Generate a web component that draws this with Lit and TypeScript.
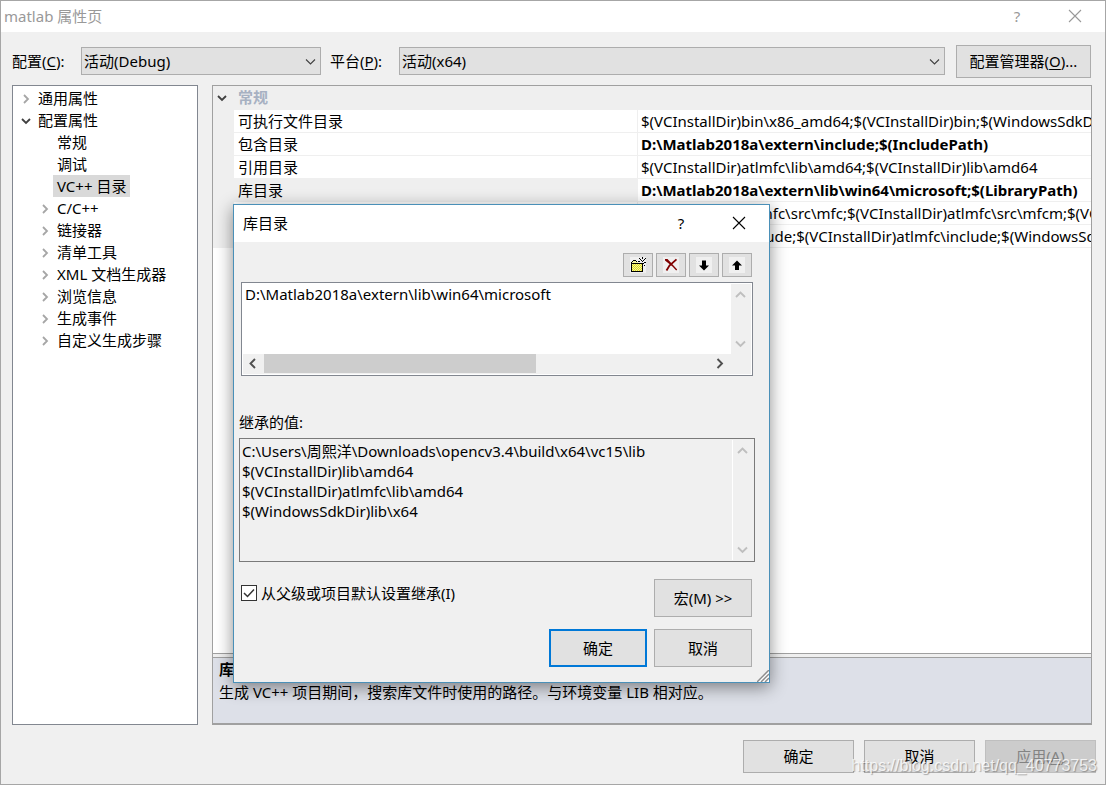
import { LitElement, html, css, svg, nothing } from "lit";
import { customElement, property } from "lit/decorators.js";
import { classMap } from "lit/directives/class-map.js";

const uiFont = css`"Noto Sans", "Noto Sans CJK SC", sans-serif`;

const controls = css`
  *,
  *::before,
  *::after {
    box-sizing: border-box;
  }
  button,
  select,
  textarea,
  input {
    margin: 0;
    font: inherit;
    color: inherit;
    border-radius: 0;
  }
  button {
    padding: 0;
    background: #e1e1e1;
    border: 1px solid #adadad;
    white-space: nowrap;
  }
  svg {
    display: block;
  }
`;

type Direction = "up" | "down" | "left" | "right";

const scrollPaths: Record<Direction, string> = {
  up: "M1 8L5.500 3.500L10 8",
  down: "M1 3.500L5.500 8L10 3.500",
  left: "M8 1L3.500 5.500L8 10",
  right: "M3.500 1L8 5.500L3.500 10",
};

const chevron = (dir: Direction, color: string) => html`
  <svg width="11" height="11" viewBox="0 0 11 11" aria-hidden="true">
    <path d=${scrollPaths[dir]} fill="none" stroke=${color} stroke-width="1.900" />
  </svg>
`;

const treeArrow = (open: boolean) => html`
  <svg width="10" height="10" viewBox="0 0 10 10" aria-hidden="true">
    <path
      d=${open ? "M1 3L5 7L9 3" : "M3 1L7 5L3 9"}
      fill="none"
      stroke=${open ? "#404040" : "#a6a6a6"}
      stroke-width="1.800"
    />
  </svg>
`;

interface TreeNode {
  label: string;
  level: 1 | 2;
  arrow?: "open" | "closed";
  selected?: boolean;
}

const tree: TreeNode[] = [
  { label: "通用属性", level: 1, arrow: "closed" },
  { label: "配置属性", level: 1, arrow: "open" },
  { label: "常规", level: 2 },
  { label: "调试", level: 2 },
  { label: "VC++ 目录", level: 2, selected: true },
  { label: "C/C++", level: 2, arrow: "closed" },
  { label: "链接器", level: 2, arrow: "closed" },
  { label: "清单工具", level: 2, arrow: "closed" },
  { label: "XML 文档生成器", level: 2, arrow: "closed" },
  { label: "浏览信息", level: 2, arrow: "closed" },
  { label: "生成事件", level: 2, arrow: "closed" },
  { label: "自定义生成步骤", level: 2, arrow: "closed" },
];

interface PropertyRow {
  name: string;
  value: string;
  changed?: boolean;
  selected?: boolean;
}

const rows: PropertyRow[] = [
  { name: "可执行文件目录", value: "$(VCInstallDir)bin\\x86_amd64;$(VCInstallDir)bin;$(WindowsSdkDir)bin" },
  { name: "包含目录", value: "D:\\Matlab2018a\\extern\\include;$(IncludePath)", changed: true },
  { name: "引用目录", value: "$(VCInstallDir)atlmfc\\lib\\amd64;$(VCInstallDir)lib\\amd64" },
  { name: "库目录", value: "D:\\Matlab2018a\\extern\\lib\\win64\\microsoft;$(LibraryPath)", changed: true, selected: true },
  { name: "源目录", value: "$(VCInstallDir)atlmfc\\src\\mfc;$(VCInstallDir)atlmfc\\src\\mfcm;$(VCInstallDir)" },
  { name: "排除目录", value: "$(VCInstallDir)include;$(VCInstallDir)atlmfc\\include;$(WindowsSdkDir)include" },
];

@customElement("category-tree")
class CategoryTree extends LitElement {
  static styles = [
    controls,
    css`
      :host {
        display: block;
        border: 1px solid #828790;
        background: #fff;
        padding-top: 1px;
        overflow: hidden;
      }
      .list {
        list-style: none;
        margin: 0;
        padding: 0 0 0 5px;
      }
      .node {
        display: flex;
        height: 22px;
        line-height: 22px;
        white-space: nowrap;
      }
      .child {
        padding-left: 19px;
      }
      .toggle {
        width: 16px;
        display: flex;
        align-items: center;
        justify-content: center;
        padding-top: 2px;
      }
      .text {
        padding: 0 4px;
      }
      .selected {
        background: #d9d9d9;
      }
    `,
  ];

  render() {
    return html`
      <ul class="list" role="tree" aria-label="属性">
        ${tree.map(
          (node) => html`
            <li
              class=${classMap({ node: true, child: node.level === 2 })}
              role="treeitem"
              aria-level=${node.level}
              aria-selected=${node.selected ? "true" : "false"}
            >
              <span class="toggle">${node.arrow ? treeArrow(node.arrow === "open") : nothing}</span>
              <span class=${classMap({ text: true, selected: !!node.selected })}>${node.label}</span>
            </li>
          `
        )}
      </ul>
    `;
  }
}

@customElement("property-grid")
class PropertyGrid extends LitElement {
  static styles = [
    controls,
    css`
      :host {
        display: flex;
        flex-direction: column;
        border: 1px solid #a0a0a0;
        border-bottom-width: 2px;
        min-width: 0;
        overflow: hidden;
      }
      .sheet {
        flex: 1;
        background: #fff;
        border-bottom: 1px solid #a0a0a0;
        overflow: hidden;
      }
      .table {
        width: 100%;
        table-layout: fixed;
        border-collapse: separate;
        border-spacing: 0;
      }
      .gutter {
        width: 21px;
      }
      .names {
        width: 403px;
      }
      .table td,
      .table th {
        height: 23px;
        padding: 0 0 0 4px;
        line-height: 22px;
        text-align: left;
        font-weight: 400;
        white-space: nowrap;
        overflow: hidden;
        border-bottom: 1px solid #efefef;
      }
      .table .fold {
        background: #efefef;
      }
      .table .category {
        height: 24px;
        background: #efefef;
        color: #a7b1c2;
        font-weight: 700;
        vertical-align: top;
      }
      .table .value {
        border-left: 1px solid #efefef;
        padding-left: 3px;
      }
      .table .changed {
        font-weight: 700;
      }
      .table .current {
        background: #efefef;
      }
      .splitter {
        height: 3px;
        background: #efefef;
      }
      .help {
        height: 66px;
        border-top: 1px solid #a0a0a0;
        background: #dde0e8;
        padding: 0 6px;
        line-height: 23px;
        white-space: nowrap;
      }
      .help-title {
        margin: 0;
        font-size: 15px;
        font-weight: 700;
      }
      .help-text {
        margin: 0;
      }
    `,
  ];

  render() {
    return html`
      <div class="sheet">
        <table class="table">
          <colgroup>
            <col class="gutter" />
            <col class="names" />
            <col />
          </colgroup>
          <thead>
            <tr>
              <td class="fold">${treeArrow(true)}</td>
              <th class="category" colspan="2">常规</th>
            </tr>
          </thead>
          <tbody>
            ${rows.map(
              (row) => html`
                <tr>
                  <td class="fold"></td>
                  <th class=${classMap({ current: !!row.selected })} scope="row">${row.name}</th>
                  <td class=${classMap({ value: true, changed: !!row.changed })}>${row.value}</td>
                </tr>
              `
            )}
          </tbody>
        </table>
      </div>
      <div class="splitter"></div>
      <section class="help">
        <h2 class="help-title">库目录</h2>
        <p class="help-text">生成 VC++ 项目期间，搜索库文件时使用的路径。与环境变量 LIB 相对应。</p>
      </section>
    `;
  }
}

const folderDots = Array.from({ length: 35 }, (_, i) => ({ x: 2 + (i % 5) * 2, y: 7 + Math.floor(i / 5) }));

const newFolderIcon = html`
  <svg width="16" height="16" viewBox="0 0 16 16" shape-rendering="crispEdges" aria-hidden="true">
    <rect width="16" height="16" fill="#f0f0f0" />
    <path d="M2 5h1V4h4v1h1v1h4v9H2z" fill="#f4f4a0" />
    ${folderDots.map((d) => svg`<rect x=${d.x + (d.y % 2)} y=${d.y} width="1" height="1" fill="#e2dc1c" />`)}
    <path
      d="M1 5h1v10H1zM2 4h1v1H2zM3 3h3v1H3zM6 4h1v1H6zM2 6h10v1H2zM12 6h1v9h-1zM1 14h12v1H1z"
      fill="#000"
    />
    <path
      d="M12 0h1v2h-1zM9 1h1v1H9zM10 2h1v1h-1zM11 3h1v1h-1zM15 1h1v1h-1zM14 2h1v1h-1zM13 3h1v1h-1zM8 4h2v1H8zM14 5h2v1h-2zM13 6h1v1h-1zM14 8h1v1h-1zM12 4h1v1h-1z"
      fill="#000"
    />
  </svg>
`;

const deleteIcon = html`
  <svg width="16" height="16" viewBox="0 0 16 16" aria-hidden="true">
    <rect width="16" height="16" fill="#f0f0f0" />
    <path d="M2 2L4.500 2L14.200 12.500L13.200 13.500L9.500 9.500L2 3.500z" fill="#800000" />
    <path d="M13.500 2.300L6.500 8.500L3.500 13.500" fill="none" stroke="#800000" stroke-width="1.800" />
  </svg>
`;

const arrowIcon = (path: string) => html`
  <svg width="16" height="16" viewBox="0 0 16 16" aria-hidden="true">
    <rect width="16" height="16" fill="#f0f0f0" />
    <path d=${path} fill="#000" />
  </svg>
`;

@customElement("directory-dialog")
class DirectoryDialog extends LitElement {
  static styles = [
    controls,
    css`
      :host {
        display: block;
        background: #f0f0f0;
        border: 1px solid #4a90b8;
        box-shadow: 0 4px 16px rgba(0, 0, 0, 0.45);
      }
      .title {
        display: flex;
        align-items: flex-start;
        height: 37px;
        padding-left: 9px;
        background: #fff;
      }
      .name {
        flex: 1;
        margin: 0;
        font-size: 15px;
        line-height: 36px;
        font-weight: 400;
      }
      .caption {
        display: grid;
        place-items: center;
        width: 56px;
        height: 36px;
        border: 0;
        background: none;
      }
      .close {
        width: 60px;
      }
      .tools {
        display: flex;
        justify-content: flex-end;
        gap: 3px;
        padding: 11px 17px 5px;
      }
      .tool {
        display: grid;
        place-items: center;
        width: 30px;
        height: 24px;
      }
      .list {
        display: grid;
        grid-template-columns: 1fr 20px;
        grid-template-rows: 1fr 20px;
        height: 94px;
        margin: 0 16px 0 7px;
        padding: 1px;
        border: 1px solid #828790;
        background: #fff;
      }
      .area {
        display: block;
        width: 100%;
        height: 100%;
        padding: 0 2px;
        border: 0;
        outline: 0;
        resize: none;
        overflow: hidden;
        white-space: pre;
        line-height: 20px;
        background: transparent;
      }
      .vbar {
        display: flex;
        flex-direction: column;
        justify-content: space-between;
        align-items: center;
        padding: 5px 1px 5px 0;
        background: #f0f0f0;
      }
      .hbar {
        grid-column: 1 / 3;
        display: flex;
        align-items: stretch;
        padding-right: 20px;
        background: #f0f0f0;
      }
      .step {
        display: grid;
        place-items: center;
        width: 21px;
        padding: 0 2px 2px 0;
      }
      .track {
        flex: 1;
      }
      .thumb {
        width: 61%;
        height: 19px;
        background: #cdcdcd;
      }
      .caption-line {
        display: block;
        margin: 36px 5px 6px;
        line-height: 20px;
      }
      .inherited {
        display: grid;
        grid-template-columns: 1fr 21px;
        height: 124px;
        margin: 0 14px 0 5px;
        padding: 1px;
        border: 1px solid #7a7a7a;
        background: #f0f0f0;
      }
      .inherited .area {
        padding: 1px;
      }
      .inherited .vbar {
        border-left: 1px solid #fff;
      }
      .options {
        display: flex;
        justify-content: space-between;
        padding: 17px 17px 12px 7px;
      }
      .check {
        display: flex;
        align-items: center;
        gap: 4px;
        height: 28px;
      }
      .box {
        display: grid;
      }
      .box > * {
        grid-area: 1 / 1;
      }
      .tick {
        appearance: none;
        width: 16px;
        height: 16px;
        border: 1px solid #333;
        background: #fff;
      }
      .mark {
        pointer-events: none;
      }
      .push {
        width: 98px;
        height: 38px;
      }
      .actions {
        display: flex;
        justify-content: flex-end;
        gap: 7px;
        padding: 0 17px 15px;
      }
      .default {
        border: 2px solid #0078d7;
      }
      .grip {
        position: absolute;
        right: 0;
        bottom: 0;
      }
    `,
  ];

  render() {
    return html`
      <header class="title">
        <h2 class="name">库目录</h2>
        <button class="caption" type="button" aria-label="帮助">?</button>
        <button class="caption close" type="button" aria-label="关闭">
          <svg width="14" height="14" viewBox="0 0 14 14">
            <path d="M1 1L13 13M13 1L1 13" stroke="#000" stroke-width="1.100" />
          </svg>
        </button>
      </header>
      <div class="tools">
        <button class="tool" type="button" aria-label="新行">${newFolderIcon}</button>
        <button class="tool" type="button" aria-label="删除">${deleteIcon}</button>
        <button class="tool" type="button" aria-label="下移">${arrowIcon("M6 3.500h4v5h3L8 13.500L3 8.500h3z")}</button>
        <button class="tool" type="button" aria-label="上移">${arrowIcon("M6 13h4V8.500h3L8 3.500L3 8.500h3z")}</button>
      </div>
      <div class="list">
        <textarea class="area" aria-label="目录" .value=${"D:\\Matlab2018a\\extern\\lib\\win64\\microsoft"}></textarea>
        <div class="vbar">${chevron("up", "#bfbfbf")}${chevron("down", "#bfbfbf")}</div>
        <div class="hbar">
          <span class="step">${chevron("left", "#505050")}</span>
          <div class="track"><div class="thumb"></div></div>
          <span class="step">${chevron("right", "#505050")}</span>
        </div>
      </div>
      <label class="caption-line" for="inherited">继承的值:</label>
      <div class="inherited">
        <textarea
          class="area"
          id="inherited"
          readonly
          .value=${[
            "C:\\Users\\周熙洋\\Downloads\\opencv3.4\\build\\x64\\vc15\\lib",
            "$(VCInstallDir)lib\\amd64",
            "$(VCInstallDir)atlmfc\\lib\\amd64",
            "$(WindowsSdkDir)lib\\x64",
          ].join("\n")}
        ></textarea>
        <div class="vbar">${chevron("up", "#bfbfbf")}${chevron("down", "#bfbfbf")}</div>
      </div>
      <div class="options">
        <label class="check">
          <span class="box">
            <input class="tick" type="checkbox" checked />
            <svg class="mark" width="16" height="16" viewBox="0 0 16 16">
              <path d="M3 8L6.500 11.500L13 4.500" fill="none" stroke="#333" stroke-width="1.500" />
            </svg>
          </span>
          从父级或项目默认设置继承(I)
        </label>
        <button class="push" type="button">宏(M) &gt;&gt;</button>
      </div>
      <footer class="actions">
        <button class="push default" type="button">确定</button>
        <button class="push" type="button">取消</button>
      </footer>
      <svg class="grip" width="12" height="12" viewBox="0 0 12 12">
        <path d="M0 12L12 0V12z" fill="#fff" />
        <path d="M0 12L12 0M4 12L12 4M8 12L12 8" stroke="#8c8c8c" stroke-width="1.500" />
      </svg>
    `;
  }
}

@customElement("combo-box")
class ComboBox extends LitElement {
  @property() label = "";
  @property() key = "";
  @property() value = "";

  static styles = [
    controls,
    css`
      :host {
        display: flex;
        align-items: center;
      }
      .label {
        flex: none;
        width: 69px;
        white-space: nowrap;
      }
      .key {
        text-underline-offset: 2px;
      }
      .field {
        flex: 1;
        min-width: 0;
        display: grid;
        align-items: center;
      }
      .field > * {
        grid-area: 1 / 1;
      }
      .select {
        appearance: none;
        width: 100%;
        height: 28px;
        padding: 0 24px 0 2px;
        background: #e1e1e1;
        border: 1px solid #adadad;
      }
      .arrow {
        justify-self: end;
        margin-right: 5px;
        pointer-events: none;
      }
    `,
  ];

  render() {
    return html`
      <label class="label" for="select">${this.label}(<u class="key">${this.key}</u>):</label>
      <div class="field">
        <select class="select" id="select">
          <option>${this.value}</option>
        </select>
        <svg class="arrow" width="11" height="11" viewBox="0 0 11 11">
          <path d="M1 3.500L5.500 8L10 3.500" fill="none" stroke="#404040" stroke-width="1.100" />
        </svg>
      </div>
    `;
  }
}

@customElement("app-root")
class AppRoot extends LitElement {
  static styles = [
    controls,
    css`
      :host {
        display: flex;
        flex-direction: column;
        position: relative;
        height: 100vh;
        box-sizing: border-box;
        overflow: hidden;
        background: #f0f0f0;
        border: 1px solid #a6a6a6;
        color: #000;
        font: 15px/20px ${uiFont};
      }
      .title {
        display: flex;
        align-items: flex-start;
        height: 31px;
        padding-left: 3px;
        background: #fff;
        color: #999;
      }
      .name {
        flex: 1;
        margin: 0;
        font-size: 15px;
        line-height: 30px;
        font-weight: 400;
      }
      .caption {
        display: grid;
        place-items: center;
        width: 56px;
        height: 30px;
        border: 0;
        background: none;
      }
      .close {
        width: 60px;
      }
      .toolbar {
        display: flex;
        align-items: flex-start;
        padding: 13px 14px 7px 11px;
      }
      .config {
        width: 309px;
        margin: 2px 9px 0 0;
      }
      .platform {
        flex: 1;
        margin: 2px 11px 0 0;
      }
      .manager {
        width: 135px;
        height: 33px;
        padding-bottom: 2px;
      }
      .key {
        text-underline-offset: 2px;
      }
      .main {
        flex: 1;
        min-height: 0;
        display: grid;
        grid-template-columns: 186px minmax(0, 1fr);
        gap: 14px;
        padding: 0 13px 0 11px;
      }
      .footer {
        display: flex;
        justify-content: flex-end;
        gap: 10px;
        padding: 15px 9px 11px;
      }
      .push {
        width: 111px;
        height: 33px;
        padding-bottom: 2px;
      }
      .push:disabled {
        background: #ccc;
        border-color: #bfbfbf;
        color: #838383;
      }
      .dialog {
        position: absolute;
        left: 232px;
        top: 203px;
        width: 537px;
      }
      .watermark {
        position: absolute;
        right: 8px;
        bottom: 8px;
        font: 16px/20px "Liberation Sans", sans-serif;
        color: rgba(255, 255, 255, 0.8);
        text-shadow: 1px 1px 1px rgba(0, 0, 0, 0.3);
        pointer-events: none;
      }
    `,
  ];

  render() {
    return html`
      <header class="title">
        <h1 class="name">matlab 属性页</h1>
        <button class="caption" type="button" aria-label="帮助">?</button>
        <button class="caption close" type="button" aria-label="关闭">
          <svg width="14" height="14" viewBox="0 0 14 14">
            <path d="M1 1L13 13M13 1L1 13" stroke="#999" stroke-width="1.100" />
          </svg>
        </button>
      </header>
      <div class="toolbar">
        <combo-box class="config" label="配置" key="C" value="活动(Debug)"></combo-box>
        <combo-box class="platform" label="平台" key="P" value="活动(x64)"></combo-box>
        <button class="manager" type="button">配置管理器(<u class="key">O</u>)...</button>
      </div>
      <main class="main">
        <category-tree></category-tree>
        <property-grid></property-grid>
      </main>
      <footer class="footer">
        <button class="push" type="button">确定</button>
        <button class="push" type="button">取消</button>
        <button class="push" type="button" disabled>应用(<u class="key">A</u>)</button>
      </footer>
      <directory-dialog class="dialog" role="dialog" aria-label="库目录"></directory-dialog>
      <span class="watermark">https://blog.csdn.net/qq_40773753</span>
    `;
  }
}
